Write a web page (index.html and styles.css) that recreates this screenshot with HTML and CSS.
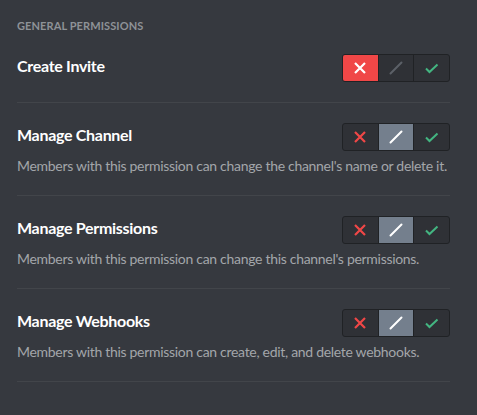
FILE: index.html
```html
<!DOCTYPE html>
<html>
<head>
<meta charset="utf-8">
<link rel="stylesheet" href="styles.css">
</head>
<body>
<div class="page">
  <h2 class="section-title">General Permissions</h2>

  <div class="perm">
    <div class="perm-head">
      <div class="perm-name">Create Invite</div>
      <div class="toggle">
        <div class="seg deny active-deny"><svg viewBox="0 0 24 24" width="24" height="24"><path d="M7 7 L17 17 M17 7 L7 17" stroke="#fff" stroke-width="2.2" fill="none"/></svg></div>
        <div class="seg pass"><svg viewBox="0 0 24 24" width="24" height="24"><path d="M17.5 6.5 L6.5 17.5" stroke="#5c6067" stroke-width="2" stroke-linecap="round" fill="none"/></svg></div>
        <div class="seg allow"><svg viewBox="0 0 24 24" width="24" height="24"><path d="M6 12.5 L9.5 16 L17.5 8.5" stroke="#43b581" stroke-width="2" fill="none"/></svg></div>
      </div>
    </div>
  </div>

  <div class="perm">
    <div class="perm-head">
      <div class="perm-name">Manage Channel</div>
      <div class="toggle">
        <div class="seg deny"><svg viewBox="0 0 24 24" width="24" height="24"><path d="M7 7 L17 17 M17 7 L7 17" stroke="#f04747" stroke-width="2.2" fill="none"/></svg></div>
        <div class="seg pass active-pass"><svg viewBox="0 0 24 24" width="24" height="24"><path d="M17.5 6.5 L6.5 17.5" stroke="#fff" stroke-width="2" stroke-linecap="round" fill="none"/></svg></div>
        <div class="seg allow"><svg viewBox="0 0 24 24" width="24" height="24"><path d="M6 12.5 L9.5 16 L17.5 8.5" stroke="#43b581" stroke-width="2" fill="none"/></svg></div>
      </div>
    </div>
    <div class="perm-desc">Members with this permission can change the channel's name or delete it.</div>
  </div>

  <div class="perm">
    <div class="perm-head">
      <div class="perm-name">Manage Permissions</div>
      <div class="toggle">
        <div class="seg deny"><svg viewBox="0 0 24 24" width="24" height="24"><path d="M7 7 L17 17 M17 7 L7 17" stroke="#f04747" stroke-width="2.2" fill="none"/></svg></div>
        <div class="seg pass active-pass"><svg viewBox="0 0 24 24" width="24" height="24"><path d="M17.5 6.5 L6.5 17.5" stroke="#fff" stroke-width="2" stroke-linecap="round" fill="none"/></svg></div>
        <div class="seg allow"><svg viewBox="0 0 24 24" width="24" height="24"><path d="M6 12.5 L9.5 16 L17.5 8.5" stroke="#43b581" stroke-width="2" fill="none"/></svg></div>
      </div>
    </div>
    <div class="perm-desc">Members with this permission can change this channel's permissions.</div>
  </div>

  <div class="perm">
    <div class="perm-head">
      <div class="perm-name">Manage Webhooks</div>
      <div class="toggle">
        <div class="seg deny"><svg viewBox="0 0 24 24" width="24" height="24"><path d="M7 7 L17 17 M17 7 L7 17" stroke="#f04747" stroke-width="2.2" fill="none"/></svg></div>
        <div class="seg pass active-pass"><svg viewBox="0 0 24 24" width="24" height="24"><path d="M17.5 6.5 L6.5 17.5" stroke="#fff" stroke-width="2" stroke-linecap="round" fill="none"/></svg></div>
        <div class="seg allow"><svg viewBox="0 0 24 24" width="24" height="24"><path d="M6 12.5 L9.5 16 L17.5 8.5" stroke="#43b581" stroke-width="2" fill="none"/></svg></div>
      </div>
    </div>
    <div class="perm-desc">Members with this permission can create, edit, and delete webhooks.</div>
  </div>
</div>
</body>
</html>
```

FILE: styles.css
```css
html, body {
  margin: 0;
  padding: 0;
  background: #36393f;
}
body {
  font-family: Lato, "Noto Sans", sans-serif;
  width: 477px;
  height: 415px;
  overflow: hidden;
}
.page {
  padding: 18px 27px 0 17px;
}
.section-title {
  margin: 0 0 20px 0;
  font-size: 11px;
  line-height: 16px;
  font-weight: 700;
  text-transform: uppercase;
  color: #8e9297;
  letter-spacing: 0.1px;
}
.perm {
  border-bottom: 1px solid #42454a;
  padding-bottom: 20px;
  margin-bottom: 20px;
}
.perm-head {
  display: flex;
  justify-content: space-between;
  align-items: flex-start;
}
.perm-name {
  font-size: 16px;
  line-height: 24px;
  font-weight: 700;
  color: #ffffff;
  letter-spacing: -0.3px;
}
.perm-desc {
  margin-top: 6px;
  font-size: 14px;
  line-height: 18px;
  color: #a3a6aa;
  white-space: nowrap;
  letter-spacing: -0.3px;
}
.toggle {
  display: flex;
  width: 108px;
  height: 28px;
  box-sizing: border-box;
  border: 1px solid #202225;
  border-radius: 3px;
  overflow: hidden;
  background: #2f3136;
}
.seg {
  flex: 1;
  display: flex;
  align-items: center;
  justify-content: center;
}
.seg + .seg {
  border-left: 1px solid #202225;
}
.seg svg {
  width: 24px;
  height: 24px;
}
.active-deny {
  background: #f04747;
}
.active-pass {
  background: #747f8d;
}
```
